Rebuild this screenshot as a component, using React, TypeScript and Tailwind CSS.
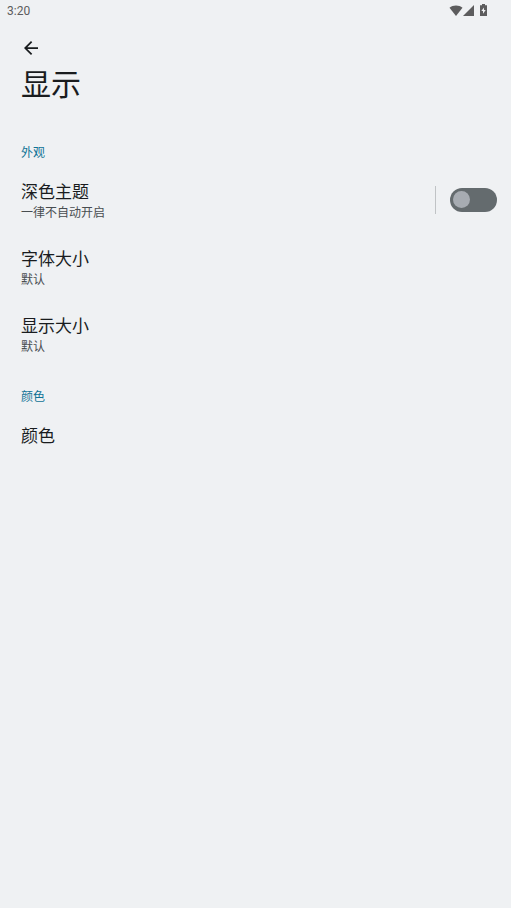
import React, { useState } from 'react';

interface SettingItem {
    title: string;
    summary?: string;
}

const textSizeItems: SettingItem[] = [
    { title: '字体大小', summary: '默认' },
    { title: '显示大小', summary: '默认' },
];

export default function App() {
    const [darkTheme, setDarkTheme] = useState(false);

    return (
        <div className="min-h-screen bg-[#eff1f3] text-[#191c1e] font-[Roboto,'Noto_Sans_CJK_SC',sans-serif]">
            <StatusBar />

            <header className="px-[21px] pt-4">
                <button type="button" aria-label="返回" className="flex w-5 h-6 items-center justify-center">
                    <svg viewBox="4 4 16 16" className="w-3.5 h-3.5" fill="currentColor" aria-hidden="true">
                        <path d="M20 11H7.830l5.590-5.590L12 4l-8 8 8 8 1.410-1.410L7.830 13H20v-2z" />
                    </svg>
                </button>
                <h1 className="mt-[5px] text-[30px] leading-10">显示</h1>
            </header>

            <main>
                <SectionTitle>外观</SectionTitle>

                {/* Dark theme */}
                <div className="flex items-center pl-[21px] pr-3.5">
                    <div className="flex-1 pt-3.5 pb-2.5">
                        <RowText title="深色主题" summary="一律不自动开启" />
                    </div>
                    <div className="h-7 border-l border-[#c0c3c5] mr-3.5" />
                    <label className="flex rounded-full cursor-pointer">
                        <input
                            type="checkbox"
                            role="switch"
                            aria-label="深色主题"
                            checked={darkTheme}
                            onChange={(e) => setDarkTheme(e.target.checked)}
                            className="peer sr-only"
                        />
                        <span className="flex w-[47px] h-6 items-center rounded-full bg-[#646b6e] px-[3px] peer-checked:justify-end">
                            <span className="w-[17px] h-[17px] rounded-full bg-[#a7acb2]" />
                        </span>
                    </label>
                </div>

                {textSizeItems.map((item) => (
                    <SettingRow key={item.title} {...item} />
                ))}

                <SectionTitle>颜色</SectionTitle>
                <SettingRow title="颜色" />
            </main>
        </div>
    );
}

function StatusBar() {
    return (
        <div className="flex h-5 items-center justify-between pl-[7px] pr-6 text-[#5c5c5d]">
            <span className="text-xs leading-5 pt-px">3:20</span>
            <div className="flex items-center">
                <svg viewBox="0 0 14 11" className="w-3.5 h-[11px]" fill="currentColor" aria-hidden="true">
                    <path d="M7 11L.5 2.800C2.300 1.200 4.500.4 7 .4s4.700.8 6.500 2.400z" />
                </svg>
                <svg viewBox="0 0 11 11" className="w-[11px] h-[11px]" fill="currentColor" aria-hidden="true">
                    <path d="M11 0v11H0z" />
                </svg>
                <svg viewBox="0 0 7 12" className="w-[7px] h-3 ml-1.5" fill="currentColor" aria-hidden="true">
                    <path fillRule="evenodd" d="M2 0h3v1.200h2V12H0V1.200h2zM4 3.500L1.300 7H3v2.700L5.700 6H4z" />
                </svg>
            </div>
        </div>
    );
}

function SectionTitle({ children }: { children: React.ReactNode }) {
    return <h2 className="px-[21px] pt-5 pb-[3px] text-xs leading-5 text-[#0f7396] first:pt-[38px]">{children}</h2>;
}

function SettingRow({ title, summary }: SettingItem) {
    return (
        <button type="button" className="block w-full px-[21px] pt-3.5 pb-2.5 text-left">
            <RowText title={title} summary={summary} />
        </button>
    );
}

function RowText({ title, summary }: SettingItem) {
    return (
        <>
            <span className="block text-[17px] leading-6">{title}</span>
            {summary && <span className="block text-xs leading-[19px] text-[#484d50]">{summary}</span>}
        </>
    );
}
